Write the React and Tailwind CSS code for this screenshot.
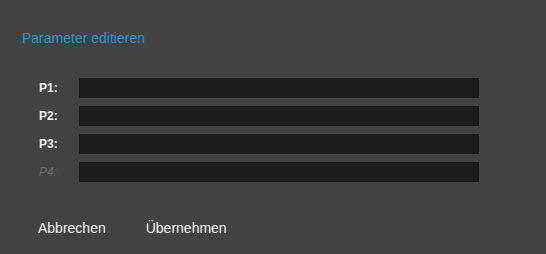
export default function App() {
  const rows = [
    { label: "P1:", disabled: false },
    { label: "P2:", disabled: false },
    { label: "P3:", disabled: false },
    { label: "P4:", disabled: true },
  ];

  return (
    <div className="w-[546px] h-[254px] bg-[#424242] font-['Liberation_Sans',Arial,sans-serif] flex flex-col">
      {/* Header */}
      <div className="pt-[30px] pl-[22px] text-[14px] leading-[16px] text-[#2a93d4]">
        Parameter editieren
      </div>

      {/* Parameter rows */}
      <div className="mt-[32px] pl-[39px] flex flex-col gap-[8px]">
        {rows.map((r) => (
          <div key={r.label} className="flex items-center h-[20px]">
            <span
              className={
                r.disabled
                  ? "w-[40px] text-[12px] italic text-[#6a6a6a]"
                  : "w-[40px] text-[12px] font-bold text-[#f0f0f0]"
              }
            >
              {r.label}
            </span>
            <div className="w-[400px] h-[20px] bg-[#1c1c1c]" />
          </div>
        ))}
      </div>

      {/* Actions */}
      <div className="mt-[38px] pl-[38px] flex gap-[40px] text-[14px] leading-[16px] text-[#f2f2f2]">
        <button className="cursor-pointer">Abbrechen</button>
        <button className="cursor-pointer">Übernehmen</button>
      </div>
    </div>
  );
}
